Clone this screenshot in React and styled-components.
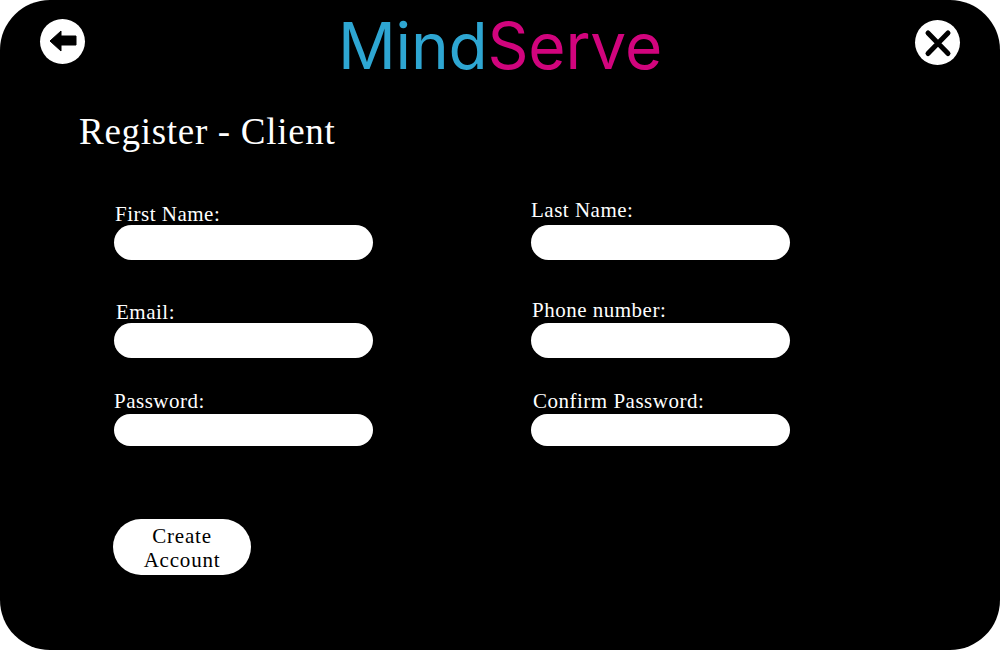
import styled, { createGlobalStyle } from "styled-components";

const GlobalStyle = createGlobalStyle`
  html, body {
    margin: 0;
    padding: 0;
    background: #ffffff;
  }
`;

const Panel = styled.div`
  width: 1000px;
  height: 650px;
  box-sizing: border-box;
  background: #000000;
  border-radius: 50px;
  overflow: hidden;
  font-family: "Liberation Serif", serif;
  color: #ffffff;
`;

const Header = styled.header`
  display: flex;
  justify-content: space-between;
  align-items: flex-start;
  height: 108px;
  padding: 19px 40px 0;
  box-sizing: border-box;
`;

const RoundButton = styled.button`
  width: 45px;
  height: 45px;
  margin-top: ${(p) => p.$top || 0}px;
  padding: 0;
  border: none;
  border-radius: 50%;
  background: #ffffff;
  display: flex;
  align-items: center;
  justify-content: center;
  cursor: pointer;
`;

const Logo = styled.h1`
  margin: -6px 0 0;
  font-family: Inter, sans-serif;
  font-weight: 400;
  font-size: 64px;
  line-height: 66px;
  letter-spacing: -0.2px;
  color: #2ea6d2;
`;

const LogoAccent = styled.span`
  color: #d1047d;
`;

const Title = styled.h2`
  margin: 1px 0 48px 79px;
  font-weight: 400;
  font-size: 37px;
  line-height: 46px;
  letter-spacing: 0.7px;
`;

const Form = styled.form`
  display: grid;
  grid-template-columns: 259px 259px;
  grid-template-rows: 98px 91px 54px;
  column-gap: 158px;
  padding-left: 114px;
`;

const Field = styled.div`
  display: flex;
  flex-direction: column;
`;

const Label = styled.label`
  font-size: 21px;
  line-height: 22px;
  letter-spacing: 0.5px;
  margin-left: ${(p) => p.$indent || 0}px;
  margin-top: ${(p) => (p.$lift ? -p.$lift : 0)}px;
  margin-bottom: ${(p) => p.$lift || 0}px;
`;

const Input = styled.input`
  width: 259px;
  height: ${(p) => p.$height || 35}px;
  box-sizing: border-box;
  border: none;
  outline: none;
  padding: 0 16px;
  border-radius: 18px;
  background: #ffffff;
`;

const CreateButton = styled.button`
  display: block;
  width: 138px;
  height: 56px;
  margin: 73px 0 0 113px;
  padding: 2px 20px 0;
  border: none;
  border-radius: 28px;
  background: #ffffff;
  color: #000000;
  font-family: "Liberation Serif", serif;
  font-size: 21px;
  line-height: 24px;
  letter-spacing: 0.8px;
  cursor: pointer;
`;

export default function App() {
  return (
    <>
      <GlobalStyle />
      <Panel>
        <Header>
          <RoundButton aria-label="Back">
            <svg width="45" height="45" viewBox="0 0 45 45">
              <path d="M10 22 L21 12 L21 17 L36 17 L36 26 L21 26 L21 32 Z" fill="#000" stroke="#000" strokeWidth="1" strokeLinejoin="round" />
            </svg>
          </RoundButton>
          <Logo>
            Mind<LogoAccent>Serve</LogoAccent>
          </Logo>
          <RoundButton aria-label="Close" $top={1}>
            <svg width="45" height="45" viewBox="0 0 45 45">
              <path d="M13 13 L33 33.5 M33 13 L13 33.5" fill="none" stroke="#000" strokeWidth="5" strokeLinecap="round" />
            </svg>
          </RoundButton>
        </Header>
        <Title>Register - Client</Title>
        <Form>
          <Field>
            <Label $indent={1}>First Name:</Label>
            <Input />
          </Field>
          <Field>
            <Label $lift={4}>Last Name:</Label>
            <Input />
          </Field>
          <Field>
            <Label $indent={2}>Email:</Label>
            <Input />
          </Field>
          <Field>
            <Label $indent={1} $lift={2}>Phone number:</Label>
            <Input />
          </Field>
          <Field>
            <Label $lift={2}>Password:</Label>
            <Input $height={32} />
          </Field>
          <Field>
            <Label $indent={2} $lift={2}>Confirm Password:</Label>
            <Input $height={32} />
          </Field>
        </Form>
        <CreateButton>Create Account</CreateButton>
      </Panel>
    </>
  );
}
